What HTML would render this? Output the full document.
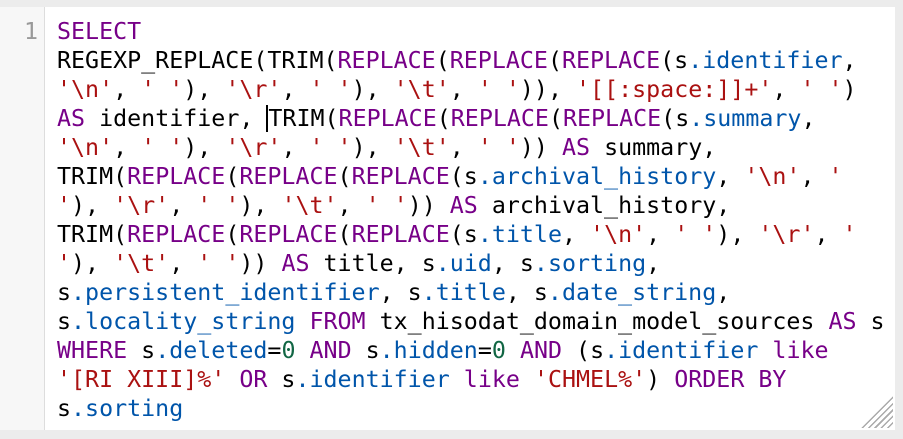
<!DOCTYPE html>
<html><head><style>
html,body{margin:0;padding:0;background:#ececec;width:903px;height:439px;overflow:hidden}
.ed{position:absolute;left:0;top:7px;width:895px;height:423px;background:#fff}
.gut{position:absolute;left:0;top:0;width:44px;height:423px;background:#f7f7f7;border-right:1px solid #ddd}
.ln{position:absolute;left:0;width:38px;text-align:right;top:10px;color:#999;font:23.3px/29px "DejaVu Sans Mono",monospace}
pre{position:absolute;left:57px;top:10px;margin:0;font:23.3px/29px "DejaVu Sans Mono",monospace;color:#000}
.k{color:#708}.s{color:#a11}.v{color:#05a}.n{color:#164}
.cur{border-left:2px solid #000;margin-left:-1px}
.grip{position:absolute;right:2px;bottom:2px;width:34px;height:34px;
background:repeating-linear-gradient(-45deg,transparent 0 3px,#aaa 3px 4.5px);clip-path:polygon(100% 0,100% 100%,0 100%)}
</style></head><body>
<div class="ed"><div class="gut"></div><div class="ln">1</div>
<pre><span class="k">SELECT</span>
REGEXP_REPLACE(TRIM(<span class="k">REPLACE</span>(<span class="k">REPLACE</span>(<span class="k">REPLACE</span>(s<span class="v">.identifier</span>,
<span class="s">'\n'</span>, <span class="s">' '</span>), <span class="s">'\r'</span>, <span class="s">' '</span>), <span class="s">'\t'</span>, <span class="s">' '</span>)), <span class="s">'[[:space:]]+'</span>, <span class="s">' '</span>)
<span class="k">AS</span> identifier, <span class="cur"></span>TRIM(<span class="k">REPLACE</span>(<span class="k">REPLACE</span>(<span class="k">REPLACE</span>(s<span class="v">.summary</span>,
<span class="s">'\n'</span>, <span class="s">' '</span>), <span class="s">'\r'</span>, <span class="s">' '</span>), <span class="s">'\t'</span>, <span class="s">' '</span>)) <span class="k">AS</span> summary,
TRIM(<span class="k">REPLACE</span>(<span class="k">REPLACE</span>(<span class="k">REPLACE</span>(s<span class="v">.archival_history</span>, <span class="s">'\n'</span>, <span class="s">'</span>
<span class="s">'</span>), <span class="s">'\r'</span>, <span class="s">' '</span>), <span class="s">'\t'</span>, <span class="s">' '</span>)) <span class="k">AS</span> archival_history,
TRIM(<span class="k">REPLACE</span>(<span class="k">REPLACE</span>(<span class="k">REPLACE</span>(s<span class="v">.title</span>, <span class="s">'\n'</span>, <span class="s">' '</span>), <span class="s">'\r'</span>, <span class="s">'</span>
<span class="s">'</span>), <span class="s">'\t'</span>, <span class="s">' '</span>)) <span class="k">AS</span> title, s<span class="v">.uid</span>, s<span class="v">.sorting</span>,
s<span class="v">.persistent_identifier</span>, s<span class="v">.title</span>, s<span class="v">.date_string</span>,
s<span class="v">.locality_string</span> <span class="k">FROM</span> tx_hisodat_domain_model_sources <span class="k">AS</span> s
<span class="k">WHERE</span> s<span class="v">.deleted</span>=<span class="n">0</span> <span class="k">AND</span> s<span class="v">.hidden</span>=<span class="n">0</span> <span class="k">AND</span> (s<span class="v">.identifier</span> <span class="k">like</span>
<span class="s">'[RI XIII]%'</span> <span class="k">OR</span> s<span class="v">.identifier</span> <span class="k">like</span> <span class="s">'CHMEL%'</span>) <span class="k">ORDER</span> <span class="k">BY</span>
s<span class="v">.sorting</span></pre>
<div class="grip"></div>
</div>
</body></html>
